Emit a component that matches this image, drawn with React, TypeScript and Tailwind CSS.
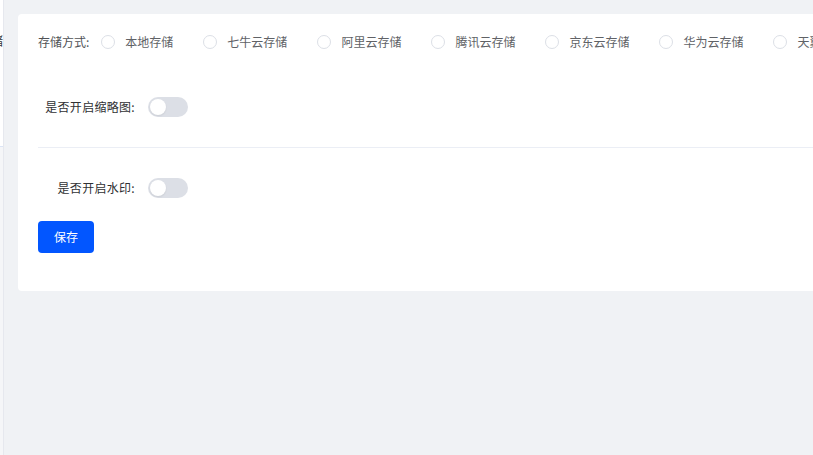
import React from "react";

const options = ["本地存储", "七牛云存储", "阿里云存储", "腾讯云存储", "京东云存储", "华为云存储", "天翼云存储"];

function Radio({ label }: { label: string }) {
  return (
    <div className="flex items-center shrink-0 mr-[30px]">
      <span className="w-[14px] h-[14px] rounded-full border border-[#dcdfe6] bg-white box-border" />
      <span className="ml-[10px] text-[12px] leading-[16px] text-[#606266] whitespace-nowrap">{label}</span>
    </div>
  );
}

function Switch() {
  return (
    <div className="relative w-[40px] h-[20px] rounded-full bg-[#dcdfe6] shrink-0">
      <span className="absolute left-[2px] top-[2px] w-[16px] h-[16px] rounded-full bg-white shadow-[0_1px_2px_rgba(0,0,0,0.08)]" />
    </div>
  );
}

export default function App() {
  return (
    <div
      className="w-[813px] h-[455px] bg-[#f0f2f5] flex overflow-hidden"
      style={{ fontFamily: '"Noto Sans CJK SC", "Noto Sans", sans-serif' }}
    >
      <div className="w-[3px] shrink-0 flex flex-col bg-[#f5f6f8]">
        <div className="h-[146px] bg-white flex flex-col">
          <div className="mt-[33px] h-[16px] flex justify-end overflow-hidden text-[12px] leading-[16px] text-[#303133] whitespace-nowrap">
            存储
          </div>
        </div>
        <div className="h-px bg-[#dbe4f5]" />
      </div>
      <div className="w-px shrink-0 bg-[#e6e8ee]" />
      <div className="flex-1 pl-[14px] pt-[14px] overflow-hidden">
        <div className="w-[900px] bg-white rounded-[4px] pt-[16px] pb-[38px] pl-[20px]">
          <div className="h-[24px] flex items-center">
            <span className="text-[12px] leading-[16px] text-[#505256] whitespace-nowrap mr-[12px]">存储方式:</span>
            {options.map((o) => (
              <Radio key={o} label={o} />
            ))}
          </div>
          <div className="mt-[33px] h-[40px] flex items-center">
            <div className="w-[97px] text-right text-[12px] leading-[16px] text-[#303133] whitespace-nowrap tracking-[0.3px]">
              是否开启缩略图:
            </div>
            <div className="ml-[13px]">
              <Switch />
            </div>
          </div>
          <div className="mt-[20px] h-px bg-[#ebeef5]" />
          <div className="mt-[20px] h-[40px] flex items-center">
            <div className="w-[97px] text-right text-[12px] leading-[16px] text-[#303133] whitespace-nowrap tracking-[0.3px]">
              是否开启水印:
            </div>
            <div className="ml-[13px]">
              <Switch />
            </div>
          </div>
          <button className="mt-[13px] w-[56px] h-[32px] rounded-[4px] bg-[#0256ff] text-white text-[12px] leading-[16px] flex items-center justify-center">
            保存
          </button>
        </div>
      </div>
    </div>
  );
}
